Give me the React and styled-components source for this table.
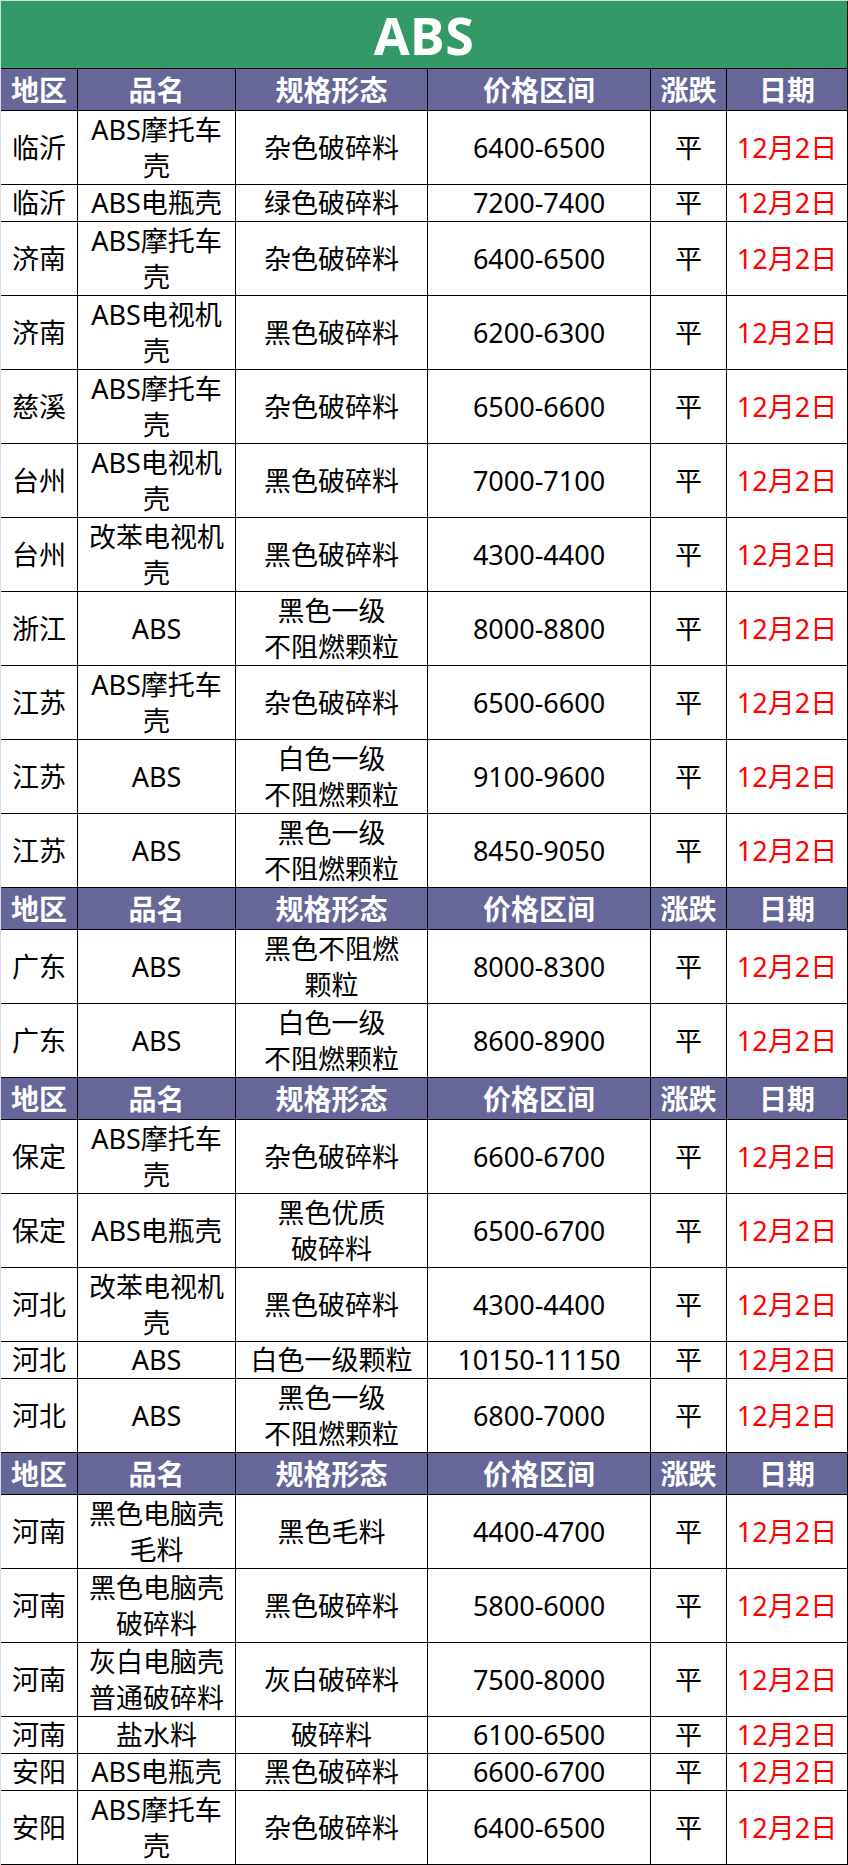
import React from "react";
import styled, { createGlobalStyle } from "styled-components";

const GlobalStyle = createGlobalStyle`
  html, body {
    margin: 0;
    padding: 0;
    background: #ffffff;
  }
  body {
    font-family: "Noto Sans", "Noto Sans CJK SC", sans-serif;
  }
`;

const COLUMNS = "77px 158px 192px 223px 76px 121px";
const HEADERS = ["地区", "品名", "规格形态", "价格区间", "涨跌", "日期"];

// 每段一个表头，下面是该段的行
const sections = [
  [
    ["临沂", "ABS摩托车\n壳", "杂色破碎料", "6400-6500"],
    ["临沂", "ABS电瓶壳", "绿色破碎料", "7200-7400"],
    ["济南", "ABS摩托车\n壳", "杂色破碎料", "6400-6500"],
    ["济南", "ABS电视机\n壳", "黑色破碎料", "6200-6300"],
    ["慈溪", "ABS摩托车\n壳", "杂色破碎料", "6500-6600"],
    ["台州", "ABS电视机\n壳", "黑色破碎料", "7000-7100"],
    ["台州", "改苯电视机\n壳", "黑色破碎料", "4300-4400"],
    ["浙江", "ABS", "黑色一级\n不阻燃颗粒", "8000-8800"],
    ["江苏", "ABS摩托车\n壳", "杂色破碎料", "6500-6600"],
    ["江苏", "ABS", "白色一级\n不阻燃颗粒", "9100-9600"],
    ["江苏", "ABS", "黑色一级\n不阻燃颗粒", "8450-9050"],
  ],
  [
    ["广东", "ABS", "黑色不阻燃\n颗粒", "8000-8300"],
    ["广东", "ABS", "白色一级\n不阻燃颗粒", "8600-8900"],
  ],
  [
    ["保定", "ABS摩托车\n壳", "杂色破碎料", "6600-6700"],
    ["保定", "ABS电瓶壳", "黑色优质\n破碎料", "6500-6700"],
    ["河北", "改苯电视机\n壳", "黑色破碎料", "4300-4400"],
    ["河北", "ABS", "白色一级颗粒", "10150-11150"],
    ["河北", "ABS", "黑色一级\n不阻燃颗粒", "6800-7000"],
  ],
  [
    ["河南", "黑色电脑壳\n毛料", "黑色毛料", "4400-4700"],
    ["河南", "黑色电脑壳\n破碎料", "黑色破碎料", "5800-6000"],
    ["河南", "灰白电脑壳\n普通破碎料", "灰白破碎料", "7500-8000"],
    ["河南", "盐水料", "破碎料", "6100-6500"],
    ["安阳", "ABS电瓶壳", "黑色破碎料", "6600-6700"],
    ["安阳", "ABS摩托车\n壳", "杂色破碎料", "6400-6500"],
  ],
];

const Sheet = styled.div`
  width: 848px;
  box-sizing: border-box;
  border-left: 1px solid #d3dae6;
  border-top: 1px solid #d3dae6;
`;

const Title = styled.div`
  height: 68px;
  box-sizing: border-box;
  background: #339966;
  border-right: 1px solid #000;
  border-bottom: 1px solid #000;
  display: flex;
  align-items: center;
  justify-content: center;
  color: #fff;
  font-family: "Noto Sans", "Noto Sans CJK SC", sans-serif;
  font-weight: 700;
  font-size: 52px;
  letter-spacing: 0.5px;
`;

const Row = styled.div`
  display: grid;
  grid-template-columns: ${COLUMNS};
  height: ${(p) => p.height}px;
  background: ${(p) => (p.head ? "#666699" : "#fff")};
`;

const Cell = styled.div`
  box-sizing: border-box;
  border-right: 1px solid #000;
  border-bottom: 1px solid #000;
  display: flex;
  align-items: center;
  justify-content: center;
  text-align: center;
  white-space: pre-line;
  overflow: hidden;
  font-size: ${(p) => (p.head ? 28 : 27)}px;
  line-height: 36px;
  font-weight: ${(p) => (p.head ? 700 : 400)};
  color: ${(p) => (p.head ? "#fff" : p.red ? "#ff0000" : "#000")};
`;

const HeaderRow = () => (
  <Row head height={42}>
    {HEADERS.map((h) => (
      <Cell head key={h}>{h}</Cell>
    ))}
  </Row>
);

const DataRow = ({ row }) => {
  const tall = row.some((t) => t.includes("\n"));
  return (
    <Row height={tall ? 74 : 37}>
      {row.map((t, i) => (
        <Cell key={i}>{t}</Cell>
      ))}
      <Cell>平</Cell>
      <Cell red>12月2日</Cell>
    </Row>
  );
};

export default function App() {
  return (
    <>
      <GlobalStyle />
      <Sheet>
        <Title>ABS</Title>
        {sections.map((rows, s) => (
          <React.Fragment key={s}>
            <HeaderRow />
            {rows.map((r, i) => (
              <DataRow key={i} row={r} />
            ))}
          </React.Fragment>
        ))}
      </Sheet>
    </>
  );
}
